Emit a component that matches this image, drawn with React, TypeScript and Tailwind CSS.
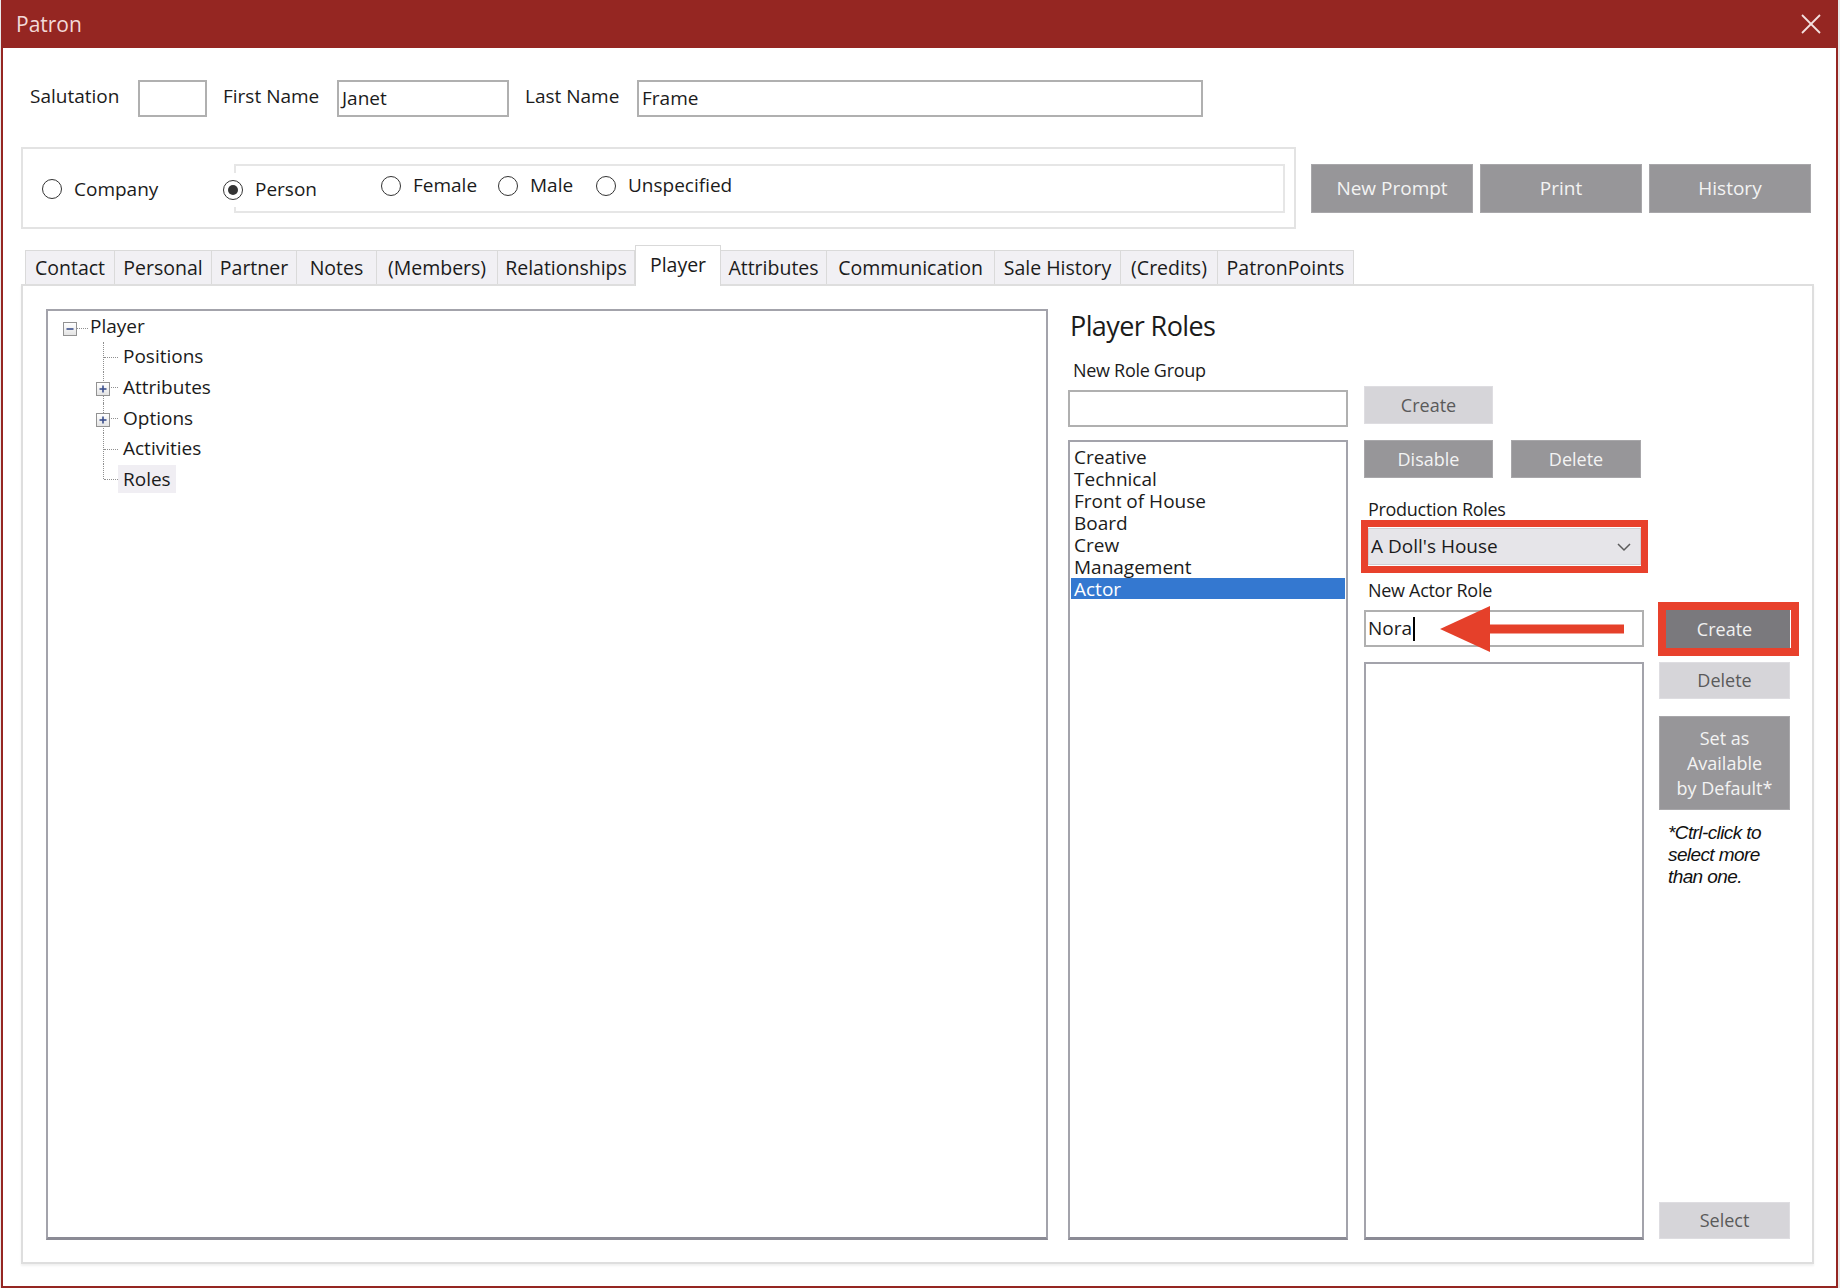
import React from "react";

function Radio({ checked }: { checked?: boolean }) {
  return (
    <span className="w-[20px] h-[20px] rounded-full border-[1.5px] border-[#333333] bg-white flex items-center justify-center shrink-0">
      {checked && <span className="w-[10px] h-[10px] rounded-full bg-[#333333]" />}
    </span>
  );
}

function Expander({ plus }: { plus?: boolean }) {
  return (
    <span className="w-[14px] h-[14px] border border-[#929292] bg-gradient-to-b from-white to-[#e4e4e4] flex items-center justify-center shrink-0 relative z-10">
      <svg width="10" height="10" viewBox="0 0 10 10">
        <line x1="1.5" y1="5" x2="8.5" y2="5" stroke="#3b4f8c" strokeWidth="1.6" />
        {plus && <line x1="5" y1="1.5" x2="5" y2="8.5" stroke="#3b4f8c" strokeWidth="1.6" />}
      </svg>
    </span>
  );
}

function TreeChild({ label, plus, last, hl }: { label: string; plus?: boolean; last?: boolean; hl?: boolean }) {
  return (
    <div className="h-[30.6px] flex items-center ml-[45px]">
      <div className="relative w-[25px] h-full shrink-0">
        <div className={`absolute left-[10px] top-0 border-l border-dotted border-[#8f8f8f] ${last ? "h-1/2" : "h-full"}`} />
        <div className="absolute left-[11px] top-1/2 w-[14px] border-t border-dotted border-[#8f8f8f]" />
        {plus && (
          <div className="absolute left-[3px] top-1/2 -translate-y-1/2 mt-[2px]">
            <Expander plus />
          </div>
        )}
      </div>
      <span className={`px-[5px] h-[28px] flex items-center leading-none ${hl ? "bg-[#f0eef3]" : ""}`}>{label}</span>
    </div>
  );
}

const tabs: [string, number][] = [
  ["Contact", 90],
  ["Personal", 97],
  ["Partner", 85],
  ["Notes", 80],
  ["(Members)", 121],
  ["Relationships", 137],
  ["Player", 86],
  ["Attributes", 106],
  ["Communication", 168],
  ["Sale History", 126],
  ["(Credits)", 97],
  ["PatronPoints", 136],
];

export default function App() {
  return (
    <div className="w-[1840px] h-[1288px] bg-[#e9e9e9] overflow-hidden [font-family:'Open_Sans',sans-serif] text-[#1b1b1b]">
      <div className="w-[1837px] h-[1288px] ml-[1px] border-x-2 border-b-2 border-[#952622] bg-white flex flex-col">
        {/* Title bar */}
        <div className="h-[48px] bg-[#952622] flex items-center justify-between pl-[13px] pr-[14px] shrink-0">
          <span className="text-[21px] text-[#f2d9d8] leading-none">Patron</span>
          <svg width="22" height="22" viewBox="0 0 22 22">
            <line x1="2" y1="2" x2="20" y2="20" stroke="#f4e2e1" strokeWidth="1.8" />
            <line x1="20" y1="2" x2="2" y2="20" stroke="#f4e2e1" strokeWidth="1.8" />
          </svg>
        </div>

        {/* Name row */}
        <div className="mt-[32px] flex items-center pl-[27px] h-[37px] text-[19px]">
          <span className="w-[108px] -mt-[4px]">Salutation</span>
          <div className="w-[69px] h-[37px] border-2 border-[#b0b0b0] bg-white" />
          <span className="w-[130px] pl-[16px] -mt-[4px]">First Name</span>
          <div className="w-[172px] h-[37px] border-2 border-[#b0b0b0] bg-white flex items-center pl-[3px]">Janet</div>
          <span className="w-[128px] pl-[16px] -mt-[4px]">Last Name</span>
          <div className="w-[566px] h-[37px] border-2 border-[#b0b0b0] bg-white flex items-center pl-[3px]">Frame</div>
        </div>

        {/* Type row */}
        <div className="mt-[30px] flex items-center ml-[18px] text-[19px]">
          <div className="w-[1275px] h-[82px] border-2 border-[#e3e3e3] flex items-center">
            <div className="w-[211px] pl-[19px] flex items-center mt-[2px]">
              <Radio />
              <span className="ml-[12px]">Company</span>
            </div>
            <div className="w-[1051px] h-[49px] border-2 border-[#e6e6e6] flex items-center">
              <div className="w-[160px] -ml-[15px] flex items-center mt-[3px]">
                <span className="bg-white px-[2px] py-[7px] flex">
                  <Radio checked />
                </span>
                <span className="ml-[10px]">Person</span>
              </div>
              <div className="w-[117px] flex items-center -mt-[5px]">
                <Radio />
                <span className="ml-[12px]">Female</span>
              </div>
              <div className="w-[98px] flex items-center -mt-[5px]">
                <Radio />
                <span className="ml-[12px]">Male</span>
              </div>
              <div className="flex items-center -mt-[5px]">
                <Radio />
                <span className="ml-[12px]">Unspecified</span>
              </div>
            </div>
          </div>
          <div className="ml-[15px] flex gap-[7px] text-[#f3f3f3]">
            <button className="w-[162px] h-[49px] bg-[#979699] border border-[#a8a7aa]">New Prompt</button>
            <button className="w-[162px] h-[49px] bg-[#979699] border border-[#a8a7aa]">Print</button>
            <button className="w-[162px] h-[49px] bg-[#979699] border border-[#a8a7aa]">History</button>
          </div>
        </div>

        {/* Tabs */}
        <div className="mt-[16px] ml-[22px] h-[39px] flex items-end text-[19.5px]">
          {tabs.map(([t, w]) =>
            t === "Player" ? (
              <div
                key={t}
                style={{ width: w }}
                className="h-[41px] -mb-[2px] relative z-10 bg-white border-x border-t border-[#d9d9d9] flex items-start justify-center pt-[4px]"
              >
                {t}
              </div>
            ) : (
              <div
                key={t}
                style={{ width: w }}
                className="h-[34px] bg-[#f1f0f4] border-t border-r border-[#dadada] first:border-l flex items-center justify-center"
              >
                {t}
              </div>
            )
          )}
        </div>

        {/* Panel */}
        <div className="ml-[18px] w-[1793px] h-[980px] border-2 border-[#dedede] shadow-[0_2px_2px_rgba(0,0,0,0.06)] flex pl-[23px] pt-[23px] pb-[22px]">
          {/* Tree */}
          <div className="w-[1002px] h-[931px] border-2 border-b-[3px] border-[#a3a3ab] border-b-[#8b8b95] text-[19px]">
            <div className="h-[30.6px] flex items-center ml-[15px]">
              <span className="mt-[6px] flex">
                <Expander />
              </span>
              <span className="w-[11px] border-t border-dotted border-[#8f8f8f] mt-[4px]" />
              <span className="pl-[2px] leading-none">Player</span>
            </div>
            <TreeChild label="Positions" />
            <TreeChild label="Attributes" plus />
            <TreeChild label="Options" plus />
            <TreeChild label="Activities" />
            <TreeChild label="Roles" last hl />
          </div>

          {/* Right area */}
          <div className="ml-[20px] flex flex-col h-[931px]">
            <div className="h-[34px] text-[27px] leading-[34px] tracking-[-0.6px] pl-[2px]">Player Roles</div>
            <div className="flex flex-1">
              {/* Col A */}
              <div className="w-[280px] flex flex-col">
                <div className="mt-[16px] leading-[22px] text-[18px] pl-[5px] tracking-[-0.3px]">New Role Group</div>
                <div className="mt-[9px] h-[37px] border-2 border-[#b0b0b0] bg-white" />
                <div className="mt-[13px] flex-1 border-2 border-b-[3px] border-[#a3a3ab] border-b-[#8b8b95] pt-[4px] text-[19px]">
                  {["Creative", "Technical", "Front of House", "Board", "Crew", "Management"].map((i) => (
                    <div key={i} className="h-[22px] leading-[22px] pl-[4px]">
                      {i}
                    </div>
                  ))}
                  <div className="h-[21px] leading-[22px] pl-[3px] mx-[1px] bg-[#3478d0] text-white">Actor</div>
                </div>
              </div>

              {/* Col B */}
              <div className="ml-[16px] w-[280px] flex flex-col text-[18px]">
                <button className="mt-[43px] w-[129px] h-[38px] bg-[#d6d5d9] text-[#5a5a5a] border border-[#dedde1]">Create</button>
                <div className="mt-[16px] flex gap-[18px] text-[#f3f3f3]">
                  <button className="w-[129px] h-[38px] bg-[#979699] border border-[#a8a7aa]">Disable</button>
                  <button className="w-[130px] h-[38px] bg-[#979699] border border-[#a8a7aa]">Delete</button>
                </div>
                <div className="mt-[20px] leading-[22px] text-[18px] pl-[4px] tracking-[-0.3px]">Production Roles</div>
                <div className="mt-[8px] ml-[4px] w-[273px] h-[37px] relative bg-[#e6e5e9] border border-[#d0cfd4] flex items-center justify-between pl-[2px] pr-[8px] text-[19px]">
                  <span>A Doll's House</span>
                  <svg width="16" height="10" viewBox="0 0 16 10">
                    <polyline points="2,2 8,8 14,2" fill="none" stroke="#5c5c5c" strokeWidth="1.5" />
                  </svg>
                  <div className="absolute -left-[8px] -right-[8px] -top-[9px] -bottom-[9px] border-[7px] border-[#e8412c] pointer-events-none" />
                </div>
                <div className="mt-[14px] leading-[22px] text-[18px] pl-[4px] tracking-[-0.3px]">New Actor Role</div>
                <div className="mt-[9px] h-[37px] border-2 border-[#b0b0b0] bg-white relative flex items-center pl-[2px] text-[19px]">
                  <span>Nora</span>
                  <span className="w-[1.5px] h-[24px] bg-black ml-[1px]" />
                  <svg className="absolute left-[70px] -top-[8px]" width="190" height="50" viewBox="0 0 190 50">
                    <polygon points="4,25 54,2 54,48" fill="#e5402a" />
                    <rect x="52" y="20.5" width="136" height="9" fill="#e5402a" />
                  </svg>
                </div>
                <div className="mt-[15px] flex-1 border-2 border-b-[3px] border-[#a3a3ab] border-b-[#8b8b95] bg-white" />
              </div>

              {/* Col C */}
              <div className="ml-[15px] w-[131px] flex flex-col text-[18px]">
                <div className="mt-[267px] relative h-[38px]">
                  <button className="w-[131px] h-[38px] bg-[#7a797d] text-[#f0f0f0]">Create</button>
                  <div className="absolute -left-[1px] -right-[9px] -top-[8px] -bottom-[8px] border-[8px] border-[#e8412c] pointer-events-none" />
                </div>
                <button className="mt-[14px] h-[37px] bg-[#d6d5d9] text-[#5a5a5a] border border-[#dedde1]">Delete</button>
                <button className="mt-[17px] h-[94px] bg-[#979699] text-[#f3f3f3] leading-[25px] border border-[#a8a7aa]">
                  Set as
                  <br />
                  Available
                  <br />
                  by Default*
                </button>
                <div className="mt-[12px] pl-[9px] [font-family:'Liberation_Sans',Arial,sans-serif] italic text-[19px] leading-[22px] tracking-[-0.6px] text-[#111]">
                  *Ctrl-click to
                  <br />
                  select more
                  <br />
                  than one.
                </div>
                <div className="flex-1" />
                <button className="mb-[1px] h-[37px] bg-[#d6d5d9] text-[#5a5a5a] border border-[#dedde1]">Select</button>
              </div>
            </div>
          </div>
        </div>
      </div>
    </div>
  );
}
